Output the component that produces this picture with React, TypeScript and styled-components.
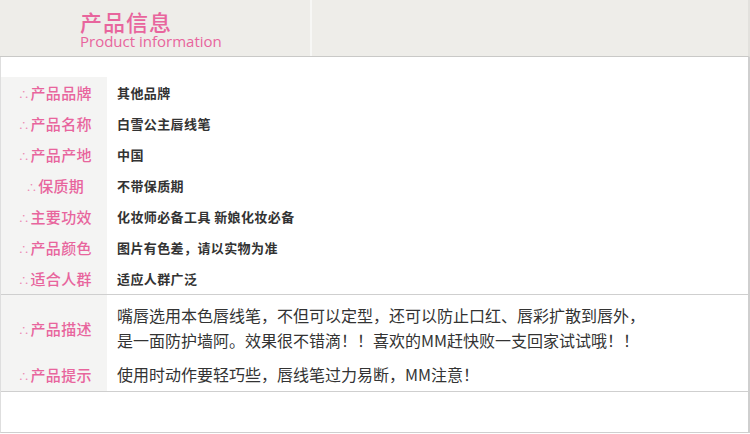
import React from "react";
import styled, { createGlobalStyle } from "styled-components";

const GlobalStyle = createGlobalStyle`
  html, body {
    margin: 0;
    padding: 0;
    background: #ffffff;
  }
  body {
    font-family: "Noto Sans CJK SC", "Noto Sans", sans-serif;
  }
`;

const pink = "#e8659d";
const line = "#cfcfcf";

const Page = styled.div`
  width: 750px;
  height: 434px;
  box-sizing: border-box;
  overflow: hidden;
`;

const Header = styled.div`
  display: flex;
  height: 56px;
  background: #eeede9;
  border-bottom: 1px solid #c9c9c7;
  border-right: 2px solid #e2e1dd;
  box-sizing: content-box;
`;

const TitleBlock = styled.div`
  width: 230px;
  padding: 9px 0 0 80px;
  border-right: 2px solid #f7f7f5;
  color: ${pink};
`;

const TitleCn = styled.div`
  font-size: 22px;
  font-weight: 500;
  line-height: 25px;
  letter-spacing: 1px;
`;

const TitleEn = styled.div`
  font-family: "Open Sans", "Liberation Sans", sans-serif;
  font-size: 15px;
  line-height: 15px;
`;

const Body = styled.div`
  height: 376px;
  border-left: 1px solid #dedede;
  border-right: 2px solid ${line};
  border-bottom: 1px solid ${line};
  padding-top: 20px;
  box-sizing: border-box;
`;

const Section = styled.div<{ $divider?: boolean }>`
  display: flex;
  flex-direction: column;
  border-bottom: ${({ $divider }) => ($divider ? `1px solid ${line}` : "none")};
  background: linear-gradient(to right, #f4f4f3 0, #f4f4f3 106px, #ffffff 106px);
`;

const Row = styled.div<{ $height?: number; $pad?: string }>`
  display: grid;
  grid-template-columns: 106px 1fr;
  align-items: center;
  min-height: ${({ $height }) => ($height ? `${$height}px` : "auto")};
  padding: ${({ $pad }) => $pad || "0"};
`;

const Label = styled.div`
  text-align: center;
  color: ${pink};
  font-size: 15px;
  font-weight: 500;
  letter-spacing: 0.3px;
  padding-left: 2px;
`;

const Dots = styled.span`
  font-size: 11px;
  font-weight: normal;
  margin-right: 1px;
  color: #ec8ab4;
`;

const Value = styled.div`
  padding-left: 10px;
  font-size: 13px;
  font-weight: bold;
  color: #333333;
  letter-spacing: 0.4px;
`;

const Desc = styled.div`
  padding-left: 10px;
  font-size: 16px;
  line-height: 25px;
  color: #333333;
`;

const specs: [string, string][] = [
  ["产品品牌", "其他品牌"],
  ["产品名称", "白雪公主唇线笔"],
  ["产品产地", "中国"],
  ["保质期", "不带保质期"],
  ["主要功效", "化妆师必备工具 新娘化妆必备"],
  ["产品颜色", "图片有色差，请以实物为准"],
  ["适合人群", "适应人群广泛"],
];

const LabelText: React.FC<{ text: string }> = ({ text }) => (
  <Label>
    <Dots>∴</Dots>
    {text}
  </Label>
);

export default function App() {
  return (
    <Page>
      <GlobalStyle />
      <Header>
        <TitleBlock>
          <TitleCn>产品信息</TitleCn>
          <TitleEn>Product information</TitleEn>
        </TitleBlock>
      </Header>
      <Body>
        <Section $divider>
          {specs.map(([k, v]) => (
            <Row key={k} $height={31}>
              <LabelText text={k} />
              <Value>{v}</Value>
            </Row>
          ))}
        </Section>
        <Section $divider>
          <Row $pad="8px 0 0">
            <LabelText text="产品描述" />
            <Desc>
              嘴唇选用本色唇线笔，不但可以定型，还可以防止口红、唇彩扩散到唇外，
              <br />
              是一面防护墙阿。效果很不错滴！！喜欢的MM赶快败一支回家试试哦！！
            </Desc>
          </Row>
          <Row $pad="9px 0 4px">
            <LabelText text="产品提示" />
            <Desc>使用时动作要轻巧些，唇线笔过力易断，MM注意！</Desc>
          </Row>
        </Section>
      </Body>
    </Page>
  );
}
